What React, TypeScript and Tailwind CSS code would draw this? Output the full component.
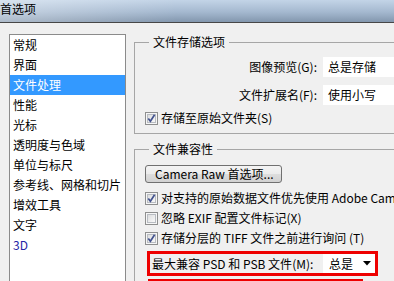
import React from 'react'

const listItems = [
  '常规',
  '界面',
  '文件处理',
  '性能',
  '光标',
  '透明度与色域',
  '单位与标尺',
  '参考线、网格和切片',
  '增效工具',
  '文字',
  '3D',
]

function CheckBox({ checked }: { checked: boolean }) {
  return (
    <svg width="13" height="13" viewBox="0 0 13 13" className="shrink-0">
      <defs>
        <linearGradient id="cbg" x1="0" y1="0" x2="1" y2="1">
          <stop offset="0" stopColor="#dadbdc" />
          <stop offset="1" stopColor="#fbfbfb" />
        </linearGradient>
      </defs>
      <rect x="0.5" y="0.5" width="12" height="12" fill="#f6f6f6" stroke="#8e8f8f" />
      <rect x="2.5" y="2.5" width="8" height="8" fill="url(#cbg)" stroke="#b8bcc2" />
      {checked && (
        <path d="M3.3 6.6 L5.4 9.3 L9.6 2.8" fill="none" stroke="#43538f" strokeWidth="1.7" />
      )}
    </svg>
  )
}

function CheckRow({ checked, label }: { checked: boolean; label: string }) {
  return (
    <div className="flex items-center gap-[3px] pl-[10px] h-[20px] whitespace-nowrap">
      <CheckBox checked={checked} />
      <span>{label}</span>
    </div>
  )
}

export default function App() {
  return (
    <div className="w-[394px] h-[281px] overflow-hidden bg-[#f0f0f0] text-[12px] leading-[16px] text-black font-['Noto_Sans_CJK_SC',sans-serif]">
      {/* title bar */}
      <div className="h-[22px] pt-px bg-[linear-gradient(to_right,rgba(255,255,255,0.35),rgba(255,255,255,0)_45%),linear-gradient(to_bottom,#c3d4e7,#a4b8cf_55%,#8397ae)]">
        首选项
      </div>
      <div className="h-px bg-[#474747]" />

      <div className="flex pt-[11px] pl-[9px]">
        {/* category list */}
        <div className="w-[117px] h-[260px] shrink-0 border border-[#8b8b8b] bg-white">
          {listItems.map((item) => (
            <div
              key={item}
              className={
                item === '文件处理'
                  ? 'h-[20px] flex items-center pl-[3px] bg-[#3399ff] text-white'
                  : item === '3D'
                    ? 'h-[20px] flex items-center pl-[3px] text-[#2626a6]'
                    : 'h-[20px] flex items-center pl-[3px]'
              }
            >
              {item}
            </div>
          ))}
        </div>

        <div className="ml-[8px] w-[290px] shrink-0 flex flex-col">
          {/* 文件存储选项 */}
          <fieldset className="border border-[#a6a6a6] pb-[7px]">
            <legend className="ml-[14px] px-[4px]">文件存储选项</legend>
            <div className="flex items-center mt-[7px] h-[20px]">
              <span className="w-[182px] text-right">图像预览(G):</span>
              <div className="ml-[6px] w-[90px] h-[20px] bg-white pl-[5px] flex items-center">总是存储</div>
            </div>
            <div className="flex items-center mt-[8px] h-[20px]">
              <span className="w-[182px] text-right">文件扩展名(F):</span>
              <div className="ml-[6px] w-[90px] h-[20px] bg-white pl-[5px] flex items-center">使用小写</div>
            </div>
            <div className="mt-[5px] flex items-center gap-[3px] pl-[10px] h-[16px] whitespace-nowrap">
              <CheckBox checked />
              <span>存储至原始文件夹(S)</span>
            </div>
          </fieldset>

          {/* 文件兼容性 */}
          <fieldset className="mt-[7px] border border-[#a6a6a6] pb-[20px]">
            <legend className="ml-[14px] px-[4px]">文件兼容性</legend>
            <button className="mt-[8px] ml-[10px] w-[137px] h-[18px] rounded-[3px] border border-[#707070] bg-[linear-gradient(to_bottom,#f4f4f4,#ebebeb_50%,#dddddd_51%,#d1d1d1)] text-left pl-[9px] leading-[16px] whitespace-nowrap">
              Camera Raw 首选项...
            </button>
            <div className="mt-[5px]">
              <CheckRow checked label="对支持的原始数据文件优先使用 Adobe Camera Raw" />
              <CheckRow checked={false} label="忽略 EXIF 配置文件标记(X)" />
              <CheckRow checked label="存储分层的 TIFF 文件之前进行询问 (T)" />
            </div>
            <div className="mt-[3px] ml-[12px] w-[231px] h-[25px] border-[3px] border-[#ee0000] flex items-center whitespace-nowrap">
              <span className="pl-[2px]">最大兼容 PSD 和 PSB 文件(M):</span>
              <div className="ml-auto w-[52px] h-full bg-white flex items-center pl-[6px]">
                <span>总是</span>
                <svg width="8" height="5" viewBox="0 0 8 5" className="ml-auto mr-[4px]">
                  <path d="M0 0 H8 L4 4.5 Z" fill="#000" />
                </svg>
              </div>
            </div>
            <div className="mt-[3px] ml-[13px] w-[215px] h-[3px] bg-[#ee0000]" />
          </fieldset>
        </div>
      </div>
    </div>
  )
}
